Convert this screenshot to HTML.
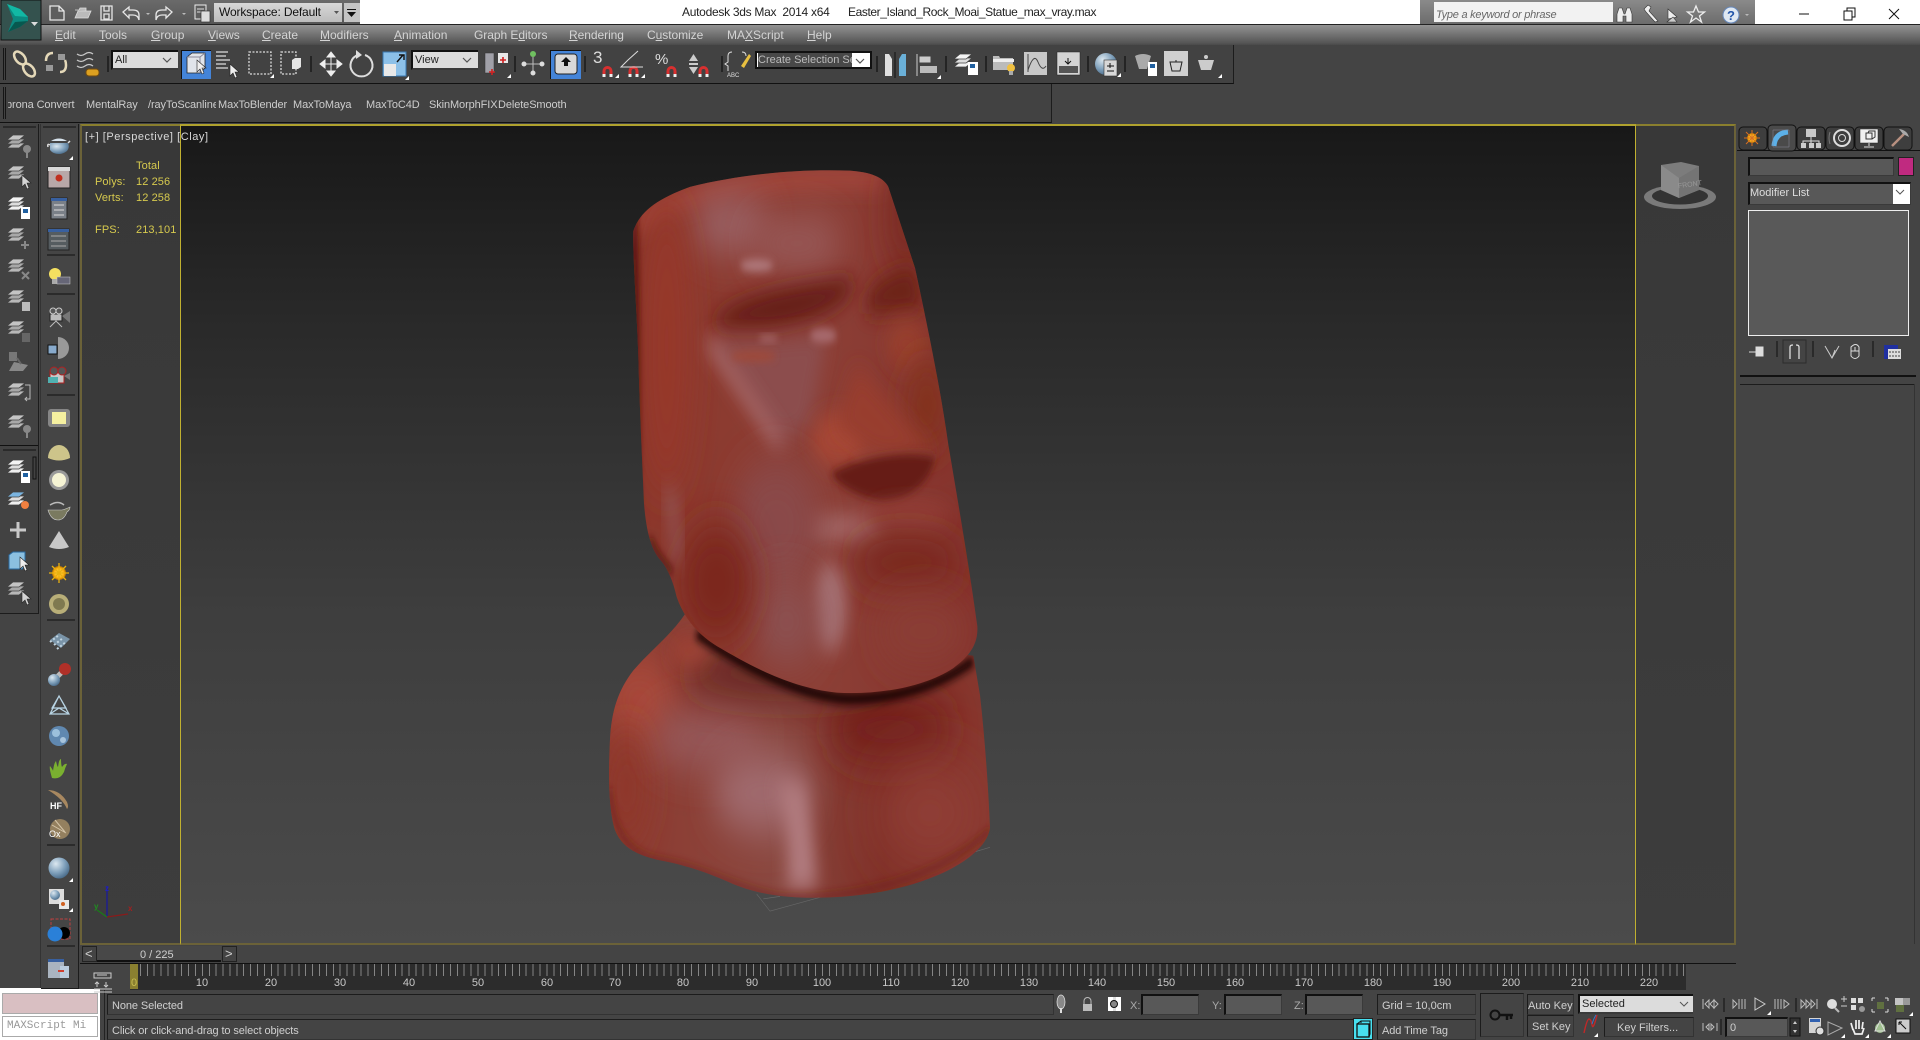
<!DOCTYPE html>
<html><head><meta charset="utf-8"><title>Autodesk 3ds Max 2014 x64</title>
<style>
html,body{margin:0;padding:0;width:1920px;height:1040px;overflow:hidden;background:#444;font-family:"Liberation Sans",sans-serif;}
div,span{position:absolute;box-sizing:border-box;white-space:nowrap;}
.t{font-size:12px;line-height:14px;color:#cfcfcf;}
.m{font-size:12px;line-height:14px;color:#d4d4d4;top:28px;}
.b{font-size:11px;line-height:13px;color:#cdcdcd;top:99px;letter-spacing:-.1px;}
.y{font-size:11px;line-height:13px;color:#d6c94e;letter-spacing:.1px;}
.r{font-size:11px;line-height:13px;color:#c8c8c8;top:977px;transform:translateX(-50%);}
.f{background:#585858;border-top:2px solid #111;border-left:2px solid #111;border-right:1px solid #3a3a3a;border-bottom:1px solid #3a3a3a;}
.bx{background:#444;border:1px solid #333;border-left-color:#1c1c1c;border-top-color:#1c1c1c;}
.d{background:#dcdcdc;border-top:2px solid #111;border-left:2px solid #111;border-bottom:2px solid #3a3a3a;color:#222;font-size:12px;line-height:16px;padding-left:2px;}
svg{position:absolute;left:0;top:0;}
u{text-decoration:underline;}
</style></head><body>

<!-- title bar -->
<div style="left:0;top:0;width:1920px;height:24px;background:#fff;"></div>
<div style="left:0;top:0;width:360px;height:24px;background:linear-gradient(#6a6a6a,#565656);"></div>
<div style="left:214px;top:3px;width:128px;height:19px;background:linear-gradient(#d8d8d8,#bcbcbc);"></div>
<div class="t" style="left:219px;top:5px;color:#111;font-size:12px;letter-spacing:-.15px;">Workspace: Default</div>
<div style="left:344px;top:3px;width:16px;height:19px;background:#c4c4c4;"></div>
<div class="t" style="left:682px;top:5px;color:#222;letter-spacing:-.28px;">Autodesk 3ds Max&nbsp; 2014 x64</div>
<div class="t" style="left:848px;top:5px;color:#222;letter-spacing:-.4px;">Easter_Island_Rock_Moai_Statue_max_vray.max</div>
<div style="left:1420px;top:0;width:335px;height:24px;background:linear-gradient(#8a8a8a,#6c6c6c);"></div>
<div style="left:1434px;top:2px;width:179px;height:20px;background:#f2f2f2;"></div>
<div class="t" style="left:1436px;top:8px;font-style:italic;font-size:11px;color:#666;letter-spacing:-.25px;">Type a keyword or phrase</div>

<!-- menu -->
<div style="left:0;top:24px;width:1920px;height:21px;background:linear-gradient(#939393,#555 90%,#4a4a4a);border-top:1px solid #222;"></div>
<div class="m" style="left:55px"><u>E</u>dit</div>
<div class="m" style="left:99px"><u>T</u>ools</div>
<div class="m" style="left:151px"><u>G</u>roup</div>
<div class="m" style="left:208px"><u>V</u>iews</div>
<div class="m" style="left:262px"><u>C</u>reate</div>
<div class="m" style="left:320px"><u>M</u>odifiers</div>
<div class="m" style="left:394px"><u>A</u>nimation</div>
<div class="m" style="left:474px;letter-spacing:-.05px">Graph E<u>d</u>itors</div>
<div class="m" style="left:569px;letter-spacing:-.05px"><u>R</u>endering</div>
<div class="m" style="left:647px;letter-spacing:-.05px">C<u>u</u>stomize</div>
<div class="m" style="left:727px">MA<u>X</u>Script</div>
<div class="m" style="left:807px"><u>H</u>elp</div>

<!-- toolbars -->
<div style="left:0;top:45px;width:1234px;height:39px;background:#424242;border-bottom:1px solid #111;border-right:1px solid #1c1c1c;"></div>
<div style="left:0;top:84px;width:1052px;height:39px;background:#424242;border-bottom:1px solid #111;border-right:1px solid #1c1c1c;"></div>
<div class="d" style="left:111px;top:50px;width:67px;height:20px;font-size:11px;">All</div>
<div style="left:181px;top:50px;width:30px;height:29px;background:#4484d8;border-left:1px solid #111;border-top:1px solid #111;"></div>
<div class="d" style="left:411px;top:50px;width:67px;height:20px;font-size:11px;">View</div>
<div style="left:550px;top:50px;width:31px;height:29px;background:#4484d8;border-left:1px solid #111;border-top:1px solid #111;"></div>
<div style="left:755px;top:51px;width:117px;height:18px;background:#fff;border:2px solid #111;"></div>
<div class="t" style="left:758px;top:53px;width:94px;height:14px;background:#484848;color:#bbb;font-size:11px;overflow:hidden;">Create Selection Se</div>

<div class="b" style="left:8px;width:70px;overflow:hidden;text-indent:-2px;">prona Convert</div>
<div class="b" style="left:86px">MentalRay</div>
<div class="b" style="left:148px;width:68px;overflow:hidden;">/rayToScanline</div>
<div class="b" style="left:218px">MaxToBlender</div>
<div class="b" style="left:293px">MaxToMaya</div>
<div class="b" style="left:366px">MaxToC4D</div>
<div class="b" style="left:429px">SkinMorphFIX</div>
<div class="b" style="left:498px">DeleteSmooth</div>

<!-- side toolbars -->
<div style="left:0;top:124px;width:39px;height:490px;background:#424242;border-right:1px solid #1c1c1c;border-bottom:1px solid #1c1c1c;"></div>
<div style="left:0;top:445px;width:38px;height:1px;background:#111;"></div>
<div style="left:40px;top:124px;width:39px;height:865px;background:#454545;border-right:1px solid #1c1c1c;border-left:1px solid #333;border-bottom:1px solid #1c1c1c;"></div>

<!-- viewport -->
<div style="left:80px;top:124px;width:1656px;height:821px;background:linear-gradient(#383838,#3d3d3d);border:2px solid #6b6238;border-top-color:#8a7f2e;"></div>
<div style="left:180px;top:124px;width:1456px;height:821px;background:linear-gradient(#181818 0,#2a2a2a 25%,#3e3e3e 60%,#4b4b4b 100%);border-left:1px solid #c0b030;border-right:1px solid #c0b030;border-top:2px solid #b0a22e;border-bottom:2px solid #6b6238;"></div>
<div class="t" style="left:85px;top:130px;font-size:11px;color:#d8d8d8;letter-spacing:.55px;">[+] [Perspective] [Clay]</div>
<div class="y" style="left:136px;top:160px">Total</div>
<div class="y" style="left:95px;top:176px">Polys:</div><div class="y" style="left:136px;top:176px">12 256</div>
<div class="y" style="left:95px;top:192px">Verts:</div><div class="y" style="left:136px;top:192px">12 258</div>
<div class="y" style="left:95px;top:224px">FPS:</div><div class="y" style="left:136px;top:224px">213,101</div>

<!-- moai -->
<svg style="left:590px;top:150px" width="420" height="770" viewBox="0 0 1260 1568" preserveAspectRatio="none">
<defs>
<clipPath id="ch"><path id="hp" d="M130,165 C150,125 200,100 300,75 C450,50 620,38 780,42 C840,45 880,55 895,75 L975,240 C1010,350 1050,480 1075,600 C1110,740 1140,860 1162,970 C1165,1005 1140,1030 1090,1055 C1000,1095 860,1110 740,1105 C600,1095 480,1050 380,1010 C320,985 280,950 260,910 C250,880 235,855 215,838 C190,820 170,790 162,720 C158,650 150,550 145,420 C140,320 128,220 130,165Z"/></clipPath>
<clipPath id="cb"><path d="M285,945 C240,990 180,1020 130,1060 C85,1100 65,1140 60,1200 C55,1270 55,1340 75,1385 C95,1420 140,1435 200,1445 C280,1455 350,1470 430,1495 C520,1520 620,1525 720,1522 C850,1518 980,1500 1080,1465 C1150,1440 1195,1410 1200,1380 C1195,1300 1185,1200 1170,1110 L1150,1030 Z"/></clipPath>
<filter id="b6" x="-60%" y="-60%" width="220%" height="220%"><feGaussianBlur stdDeviation="9"/></filter>
<filter id="b14" x="-80%" y="-80%" width="260%" height="260%"><feGaussianBlur stdDeviation="22"/></filter>
<filter id="b28" x="-100%" y="-100%" width="300%" height="300%"><feGaussianBlur stdDeviation="42"/></filter>
<filter id="b50" x="-100%" y="-100%" width="300%" height="300%"><feGaussianBlur stdDeviation="70"/></filter>
<linearGradient id="gh" x1="0" x2="1" y1="0" y2="0"><stop offset="0" stop-color="#7c2a20"/><stop offset=".15" stop-color="#8c382c"/><stop offset=".55" stop-color="#8c3f36"/><stop offset="1" stop-color="#84302a"/></linearGradient>
<linearGradient id="gb" x1="0" x2="1" y1="0" y2="0"><stop offset="0" stop-color="#8e372c"/><stop offset=".45" stop-color="#8a4840"/><stop offset=".7" stop-color="#7f2f26"/><stop offset="1" stop-color="#8a3930"/></linearGradient>
</defs>
<path d="M500,1515 L540,1550 L700,1520 M1150,1430 L1200,1420 M520,1525 L570,1520" stroke="#666" fill="none" stroke-width="1.500"/>
<g clip-path="url(#cb)">
<rect x="0" y="900" width="1260" height="668" fill="url(#gb)"/>
<ellipse cx="150" cy="1120" rx="110" ry="90" fill="#a8483a" filter="url(#b28)"/>
<ellipse cx="110" cy="1300" rx="60" ry="120" fill="#8f372c" filter="url(#b28)"/>
<ellipse cx="350" cy="1200" rx="170" ry="60" fill="#96595a" filter="url(#b28)"/>
<ellipse cx="520" cy="1310" rx="150" ry="80" fill="#a06a6e" filter="url(#b28)"/>
<path d="M560,1290 L640,1290 C660,1360 680,1440 680,1505 L590,1505 C600,1420 585,1350 560,1290Z" fill="#b07a7e" filter="url(#b14)"/>
<ellipse cx="900" cy="1180" rx="190" ry="70" fill="#74231a" filter="url(#b28)"/>
<ellipse cx="1020" cy="1350" rx="160" ry="90" fill="#923f38" filter="url(#b50)"/>
<ellipse cx="600" cy="1065" rx="320" ry="45" fill="#60201a" filter="url(#b28)"/>
<ellipse cx="300" cy="1020" rx="60" ry="30" fill="#9e4234" filter="url(#b14)"/>
<path d="M320,985 C480,1060 650,1115 780,1118 C920,1118 1050,1090 1150,1040" stroke="#150302" stroke-width="20" fill="none" filter="url(#b6)"/>
<path d="M60,1300 C70,1400 130,1440 220,1448 C350,1465 430,1500 560,1520 C800,1530 1050,1480 1200,1385" stroke="#6a2018" stroke-width="8" fill="none" filter="url(#b6)"/>
</g>
<g clip-path="url(#ch)">
<rect x="0" y="0" width="1260" height="1200" fill="url(#gh)"/>
<path d="M130,160 C200,100 500,45 890,60" stroke="#ab4a3c" stroke-width="30" fill="none" filter="url(#b14)"/>
<ellipse cx="420" cy="150" rx="120" ry="60" fill="#9a6064" filter="url(#b28)"/>
<ellipse cx="620" cy="190" rx="140" ry="50" fill="#985a5a" filter="url(#b28)"/>
<ellipse cx="500" cy="235" rx="50" ry="12" fill="#b07a7e" filter="url(#b6)"/>
<ellipse cx="230" cy="400" rx="70" ry="300" fill="#96372a" filter="url(#b28)"/>
<ellipse cx="135" cy="500" rx="14" ry="400" fill="#5a170f" filter="url(#b6)"/>
<ellipse cx="950" cy="130" rx="60" ry="130" fill="#7a2a20" filter="url(#b28)"/>
<path d="M360,355 C420,300 600,275 790,262 C800,300 700,345 560,360 C480,365 420,365 360,355Z" fill="#651a12" filter="url(#b14)"/>
<path d="M830,300 C860,260 930,240 975,240 L1000,320 C950,330 880,330 830,335Z" fill="#6c2016" filter="url(#b14)"/>
<ellipse cx="950" cy="395" rx="60" ry="50" fill="#97412f" filter="url(#b14)"/>
<ellipse cx="1010" cy="520" rx="60" ry="90" fill="#82301f" filter="url(#b28)"/>
<path d="M360,385 L540,385 L710,375 L680,480 L660,560 L570,600 Z" fill="#8c4e4e" filter="url(#b14)"/>
<path d="M355,388 L570,600" stroke="#ae7478" stroke-width="24" fill="none" filter="url(#b14)"/>
<ellipse cx="700" cy="378" rx="40" ry="14" fill="#a86c70" filter="url(#b6)"/>
<ellipse cx="535" cy="384" rx="30" ry="6" fill="#a86c70" filter="url(#b6)"/>
<ellipse cx="490" cy="420" rx="70" ry="10" fill="#a04838" filter="url(#b6)"/>
<ellipse cx="750" cy="590" rx="85" ry="55" fill="#a64636" filter="url(#b14)"/>
<path d="M800,440 L1035,620 L860,620 L740,560 Z" fill="#983e2f" filter="url(#b14)"/>
<path d="M720,660 C800,625 950,605 1035,620 C1030,670 960,715 880,715 C820,710 760,690 720,660Z" fill="#661b13" filter="url(#b6)"/>
<path d="M1035,620 C990,610 880,608 790,630" stroke="#9c4e42" stroke-width="6" fill="none" filter="url(#b6)"/>
<ellipse cx="760" cy="770" rx="120" ry="26" fill="#a46a6a" filter="url(#b14)"/>
<ellipse cx="960" cy="745" rx="120" ry="24" fill="#94423a" filter="url(#b14)"/>
<ellipse cx="950" cy="840" rx="170" ry="50" fill="#78271c" filter="url(#b28)"/>
<ellipse cx="560" cy="760" rx="130" ry="130" fill="#8a4a4a" filter="url(#b28)"/>
<ellipse cx="720" cy="930" rx="50" ry="90" fill="#a47072" filter="url(#b14)"/>
<ellipse cx="590" cy="960" rx="100" ry="90" fill="#8c4f50" filter="url(#b28)"/>
<ellipse cx="380" cy="880" rx="110" ry="120" fill="#7c281c" filter="url(#b28)"/>
<ellipse cx="1000" cy="980" rx="140" ry="70" fill="#8a3d34" filter="url(#b28)"/>
<path d="M235,690 C255,740 255,790 262,840" stroke="#97707a" stroke-width="16" fill="none" filter="url(#b14)"/>
<path d="M180,790 C200,830 230,845 245,860" stroke="#4a120c" stroke-width="12" fill="none" filter="url(#b6)"/>
</g>
</svg>

<!-- timeline slider -->
<div style="left:82px;top:946px;width:15px;height:16px;background:#444;border:1px solid #222;"></div>
<div class="t" style="left:85px;top:947px;font-size:13px;">&lt;</div>
<div style="left:97px;top:946px;width:124px;height:16px;background:#484848;border-bottom:2px solid #111;"></div>
<div class="t" style="left:140px;top:948px;font-size:11px;">0 / 225</div>
<div style="left:222px;top:946px;width:15px;height:16px;background:#444;border:1px solid #222;"></div>
<div class="t" style="left:225px;top:947px;font-size:13px;">&gt;</div>

<!-- ruler -->
<div style="left:80px;top:963px;width:1656px;height:1px;background:#111;"></div>
<div style="left:130px;top:964px;width:1556px;height:26px;background:#2c2c2c;"></div>
<div style="left:133px;top:964px;width:1553px;height:12px;background:repeating-linear-gradient(90deg,#858585 0,#858585 1px,transparent 1px,transparent 6.89px);"></div>
<div style="left:130px;top:964px;width:8px;height:25px;background:#8a8030;"></div>
<div class="r" style="left:134px;color:#c9bd50">0</div>
<div class="r" style="left:202px">10</div><div class="r" style="left:271px">20</div><div class="r" style="left:340px">30</div><div class="r" style="left:409px">40</div><div class="r" style="left:478px">50</div><div class="r" style="left:547px">60</div><div class="r" style="left:615px">70</div><div class="r" style="left:683px">80</div><div class="r" style="left:752px">90</div><div class="r" style="left:822px">100</div><div class="r" style="left:891px">110</div><div class="r" style="left:960px">120</div><div class="r" style="left:1029px">130</div><div class="r" style="left:1097px">140</div><div class="r" style="left:1166px">150</div><div class="r" style="left:1235px">160</div><div class="r" style="left:1304px">170</div><div class="r" style="left:1373px">180</div><div class="r" style="left:1442px">190</div><div class="r" style="left:1511px">200</div><div class="r" style="left:1580px">210</div><div class="r" style="left:1649px">220</div>

<!-- status -->
<div style="left:0;top:988px;width:41px;height:1px;background:#fff;"></div>
<div style="left:0;top:989px;width:100px;height:51px;background:#fff;"></div>
<div style="left:2px;top:993px;width:96px;height:21px;background:#d9bfc2;border:1px solid #aaa;"></div>
<div style="left:2px;top:1016px;width:96px;height:21px;background:#fff;border:1px solid #aaa;overflow:hidden;font-family:'Liberation Mono',monospace;font-size:11px;line-height:19px;color:#999;padding-left:4px;">MAXScript Mi</div>
<div style="left:104px;top:990px;width:1px;height:50px;background:#222;"></div>
<div class="bx" style="left:107px;top:994px;width:947px;height:21px;"></div>
<div class="t" style="left:112px;top:999px;font-size:11px;letter-spacing:-.1px;">None Selected</div>
<div class="bx" style="left:107px;top:1019px;width:1246px;height:21px;border-right:0;"></div>
<div class="t" style="left:112px;top:1024px;font-size:11px;letter-spacing:-.1px;">Click or click-and-drag to select objects</div>
<div class="t" style="left:1130px;top:999px;font-size:11px;color:#aaa;">X:</div>
<div class="f" style="left:1141px;top:994px;width:58px;height:21px;"></div>
<div class="t" style="left:1212px;top:999px;font-size:11px;color:#aaa;">Y:</div>
<div class="f" style="left:1224px;top:994px;width:58px;height:21px;"></div>
<div class="t" style="left:1294px;top:999px;font-size:11px;color:#aaa;">Z:</div>
<div class="f" style="left:1305px;top:994px;width:58px;height:21px;"></div>
<div class="bx" style="left:1377px;top:994px;width:99px;height:21px;"></div>
<div class="t" style="left:1382px;top:999px;font-size:11px;">Grid = 10,0cm</div>
<div class="bx" style="left:1377px;top:1019px;width:99px;height:21px;"></div>
<div class="t" style="left:1382px;top:1024px;font-size:11px;letter-spacing:-.1px;">Add Time Tag</div>
<div style="left:1353px;top:1018px;width:20px;height:22px;background:#48e0f0;border:1px solid #222;"></div>
<div class="bx" style="left:1480px;top:993px;width:44px;height:44px;"></div>
<div class="bx" style="left:1527px;top:994px;width:47px;height:21px;"></div>
<div class="t" style="left:1528px;top:999px;font-size:11px;">Auto Key</div>
<div class="bx" style="left:1527px;top:1015px;width:47px;height:22px;"></div>
<div class="t" style="left:1532px;top:1020px;font-size:11px;">Set Key</div>
<div class="d" style="left:1578px;top:994px;width:115px;height:20px;font-size:11px;">Selected</div>
<div class="bx" style="left:1604px;top:1017px;width:90px;height:20px;"></div>
<div class="t" style="left:1617px;top:1021px;font-size:11px;">Key Filters...</div>
<div class="f" style="left:1725px;top:1017px;width:63px;height:20px;"></div>
<div class="t" style="left:1730px;top:1021px;font-size:11px;">0</div>

<!-- command panel -->
<div style="left:1737px;top:150px;width:183px;height:1px;background:#111;"></div>
<div class="f" style="left:1748px;top:157px;width:146px;height:19px;"></div>
<div style="left:1898px;top:157px;width:16px;height:19px;background:#c02a80;border:1px solid #222;"></div>
<div class="f" style="left:1748px;top:182px;width:163px;height:23px;"></div>
<div style="left:1893px;top:184px;width:17px;height:20px;background:#fff;"></div>
<div class="t" style="left:1750px;top:186px;font-size:11px;color:#ddd;">Modifier List</div>
<div style="left:1748px;top:210px;width:161px;height:126px;background:#595959;border:1px solid #eee;"></div>
<div style="left:1740px;top:375px;width:176px;height:2px;background:#111;"></div>
<div style="left:1740px;top:384px;width:174px;height:1px;background:#1c1c1c;"></div>
<div style="left:1914px;top:384px;width:1px;height:560px;background:#333;"></div>

<!-- icons -->
<svg width="1920" height="1040" viewBox="0 0 1920 1040">
<defs>
<radialGradient id="sp" cx=".35" cy=".3" r=".8"><stop offset="0" stop-color="#dce8f0"/><stop offset=".55" stop-color="#7fa0bb"/><stop offset="1" stop-color="#3f6180"/></radialGradient>
<radialGradient id="sn" cx=".5" cy=".5" r=".5"><stop offset="0" stop-color="#ffe060"/><stop offset=".7" stop-color="#ffb010"/><stop offset="1" stop-color="#b07000"/></radialGradient>
<g id="ls" stroke="#424242" stroke-width=".7"><path d="M-9,5 L-3,0 H9 L3,5Z" fill="#b8b8b8"/><path d="M-9,1 L-3,-4 H9 L3,1Z" fill="#a8a8a8"/><path d="M-9,-3 L-3,-8 H9 L3,-3Z" fill="#c4c4c4"/></g>
<g id="lw" stroke="#424242" stroke-width=".7"><path d="M-9,5 L-3,0 H9 L3,5Z" fill="#f0f0f0"/><path d="M-9,1 L-3,-4 H9 L3,1Z" fill="#ddd"/><path d="M-9,-3 L-3,-8 H9 L3,-3Z" fill="#f4f4f4"/></g>
<g id="lb" stroke="#424242" stroke-width=".7"><path d="M-9,5 L-3,0 H9 L3,5Z" fill="#f0f0f0"/><path d="M-9,1 L-3,-4 H9 L3,1Z" fill="#ddd"/><path d="M-9,-3 L-3,-8 H9 L3,-3Z" fill="#7ab4e0"/></g>
<path id="cur" d="M0,0 L0,12 L3,9 L5,14 L7,13 L5,8 L9,8Z" fill="#eee" stroke="#222" stroke-width=".6"/>
<g id="tri"><path d="M0,4 L4,0 L4,4Z" fill="#fff"/></g>
<g id="mg"><path d="M0,10 v-5 a3.500,3.500 0 0 1 7,0 v5" stroke="#d83030" stroke-width="3" fill="none"/><path d="M-1.500,8 h3 v3 h-3z M5.500,8 h3 v3 h-3z" fill="#eee"/></g>
</defs>

<!-- logo -->
<rect x="1" y="0" width="40" height="40" fill="#34524e" stroke="#111"/>
<path d="M7,4 L20,9 L28,17 L28,21 L20,27 L8,32 L13,19Z" fill="#0c8a80"/><path d="M7,4 L20,9 L28,17 L15,16Z" fill="#12b8a4"/><path d="M8,32 L20,27 L28,21 L15,22Z" fill="#07584f"/><path d="M31,22 h7 l-3.500,4z" fill="#ddd"/>

<!-- quick access -->
<g fill="none" stroke="#e6e6e6" stroke-width="1.300">
<path d="M50,6 h9 l5,5 v9 h-14z M59,6 v5 h5" fill="#5e5e5e"/>
<path d="M75,10 h4 l1,-2 h6 v3 M75,18 l3,-7 h13 l-3,7z" fill="#bbb" stroke="#ddd" stroke-width=".8"/>
<path d="M101,6 h11 v14 h-11z M104,6 v5 h5 v-5 M104,14 h5 v5 h-5z"/>
<path d="M123,12 l6,-5 v3 h4 q6,0 6,5 v5 q-1,-5 -6,-5 h-4 v3z"/>
<path d="M172,12 l-6,-5 v3 h-4 q-6,0 -6,5 v5 q1,-5 6,-5 h4 v3z"/>
</g>
<path d="M146,13 h4 l-2,2z M182,13 h4 l-2,2z" fill="#bbb"/>
<rect x="195" y="5" width="11" height="14" fill="#5e5e5e" stroke="#eee"/><path d="M197,9 h7 M197,12 h7" stroke="#ddd"/><rect x="201" y="11" width="9" height="11" fill="#ddd" stroke="#333" stroke-width=".7"/>
<path d="M334,11 h5 l-2.500,3z" fill="#555"/><path d="M347,12 h9 l-4.500,5z M347,9 h9 v1 h-9z" fill="#111"/>

<!-- search icons -->
<g fill="#eee" stroke="#333" stroke-width=".6">
<path d="M1617,22 v-8 l2,-6 h3 l2,6 h1 l2,-6 h3 l2,6 v8 h-6 v-6 h-3 v6z"/>
<path d="M1644,9 l4,-4 l3,2 l-2,4 l9,10 l-3,1 l-9,-10z"/>
<path d="M1668,9 l9,8 l-9,2z"/><path d="M1667,22 h10 l-4,-5z" fill="#ccc"/>
<path d="M1696,6 l2.500,6 h6 l-5,4 l2,6 l-5.500,-4 l-5.500,4 l2,-6 l-5,-4 h6z" fill="none" stroke="#eee" stroke-width="1.300"/>
</g>
<circle cx="1731" cy="15" r="8" fill="#dfe8f2" stroke="#6688bb"/><text x="1727" y="20" font-family="Liberation Sans" font-size="13" font-weight="bold" fill="#2255aa">?</text>
<path d="M1745,14 h4 l-2,2z" fill="#bbb"/>
<path d="M1799,14 h10" stroke="#111" stroke-width="1"/>
<path d="M1844,11 h8 v9 h-8z M1847,11 v-3 h8 v9 h-3" fill="none" stroke="#111"/>
<path d="M1889,9 l10,10 M1899,9 l-10,10" stroke="#111"/>

<!-- grips / dividers -->
<path d="M3.500,48 v32 M5.500,48 v32 M3.500,87 v32 M5.500,87 v32" stroke="#111" stroke-width=".9"/>
<path d="M108,56 v16 M311,56 v16 M515,56 v16 M585,56 v16 M722,56 v16 M877,56 v16 M946,56 v16 M986,56 v16 M1088,56 v16 M1125,56 v16" stroke="#111" stroke-width="1.200"/>

<!-- link, unlink, bind -->
<g fill="none" stroke="#e4d8b8" stroke-width="2.500">
<ellipse cx="20" cy="58" rx="4.500" ry="7.500" transform="rotate(-40 20 58)"/><ellipse cx="29" cy="70" rx="4.500" ry="7.500" transform="rotate(-40 29 70)"/>
<path d="M53,53 q-7,0 -7,8 M60,72 q6,0 6,-7 q0,-3 -1,-5"/>
<path d="M77,54 q4,3 8,0 t8,0 M77,60 q4,3 8,0 t8,0 M77,66 q4,3 8,0 t8,0" stroke="#c8c8c8" stroke-width="1.300"/>
</g>
<g fill="#999"><rect x="58" y="54" width="7" height="6"/><rect x="46" y="65" width="7" height="6"/></g>
<rect x="86" y="69" width="13" height="7" rx="3" fill="#dca020" stroke="#704a10"/>

<!-- select -->
<path d="M187,57 l5,-4 h13 v15 l-5,5 h-13z" fill="#e0e4ea" stroke="#222" stroke-width=".8"/><path d="M200,57 h-13 M200,57 l5,-4 M200,57 v16" stroke="#889" fill="none"/>
<use href="#cur" x="197" y="60"/>
<path d="M216,52 h12 M216,56 h10 M216,60 h14 M216,64 h10 M216,68 h12" stroke="#ddd" stroke-width="1.200"/><use href="#cur" x="230" y="64"/>
<rect x="249" y="52" width="22" height="22" fill="none" stroke="#ddd" stroke-dasharray="2 1.500" stroke-width="1.300"/><use href="#tri" x="270" y="74"/>
<rect x="281" y="52" width="15" height="22" fill="none" stroke="#ddd" stroke-dasharray="2 1.500" stroke-width="1.300"/><path d="M292,60 l3,-2 h6 v9 l-3,2 h-6z" fill="#e4e4e4"/>
<path d="M322,64 h18 M331,55 v18 M327,57 l4,-5 l4,5z M327,71 l4,5 l4,-5z M325,60 l-5,4 l5,4z M337,60 l5,4 l-5,4z" stroke="#eee" fill="#eee" stroke-width="1"/>
<path d="M358,55 a11,11 0 1 0 7,0" fill="none" stroke="#ddd" stroke-width="2"/><path d="M356,50 l6,5 l-6,4z" fill="#ddd"/>
<rect x="383" y="52" width="23" height="24" fill="#8cc0e8" stroke="#3a78b0"/><rect x="384" y="64" width="12" height="12" fill="#e8e8e8"/><path d="M397,62 l6,-7 M399,55 h5 v5" stroke="#111" fill="none" stroke-width="1.400"/><use href="#tri" x="405" y="76"/>
<rect x="485" y="53" width="9" height="20" fill="#a0a0a8" stroke="#333" stroke-width=".5"/><rect x="498" y="53" width="10" height="10" fill="#e8e8e8"/><path d="M489,72 h6 M492,69 v6 M500,60 h6 M503,57 v6" stroke="#d02020" stroke-width="1.600"/><use href="#tri" x="507" y="74"/>
<path d="M524,64 h18 M533,55 v18" stroke="#bbb"/><circle cx="533" cy="54" r="3" fill="#70c060"/><circle cx="524" cy="64" r="2.500" fill="#ddd"/><circle cx="542" cy="64" r="2.500" fill="#ddd"/><circle cx="533" cy="73" r="2.500" fill="#ddd"/>
<rect x="555" y="54" width="22" height="20" rx="3" fill="#d8d8d8" stroke="#222"/><path d="M566,57 l5,5 h-3 v4 h-4 v-4 h-3z" fill="#111"/>
<text x="593" y="63" font-family="Liberation Sans" font-size="17" fill="#ddd">3</text>
<text x="655" y="64" font-family="Liberation Sans" font-size="15" fill="#ddd">%</text>
<use href="#mg" x="604" y="66"/><use href="#mg" x="630" y="66"/><use href="#mg" x="668" y="66"/><use href="#mg" x="700" y="66"/>
<path d="M628,60 l-7,7 h22 M638,51 l-10,9" stroke="#ddd" fill="none"/>
<use href="#tri" x="615" y="74"/><use href="#tri" x="641" y="74"/>
<path d="M689,61 h9 l-4.500,-7z" fill="#ccc"/><rect x="689" y="63" width="9" height="2" fill="#ccc"/><path d="M689,67 h9 l-4.500,7z" fill="#ccc"/>
<path d="M732,52 q-4,0 -4,4 v6 l-3,2 l3,2 v5 M742,52 q4,0 4,4" fill="none" stroke="#ddd"/><path d="M741,66 l8,-12 l2,2 l-7,12z" fill="#e8c040"/><text x="727" y="77" font-family="Liberation Sans" font-size="6" fill="#ddd">ABC</text>
<path d="M885,54 h4 l3,5 v17 h-7z" fill="#e0e0e0"/><path d="M906,54 h-4 l-3,5 v17 h7z" fill="#6ab0d8"/><path d="M895,52 v26" stroke="#111"/>
<path d="M917,54 v22 M920,57 h10 v5 h-10z" stroke="#ccc" fill="#ccc"/><rect x="920" y="66" width="17" height="7" fill="#bbb"/><use href="#tri" x="937" y="75"/>
<use href="#lw" x="963" y="62"/><rect x="968" y="62" width="10" height="13" fill="#fff"/><rect x="970" y="64" width="5" height="4" fill="#2060a0"/>
<path d="M993,56 h6 l1,2 h13 v12 h-20z" fill="#bbb"/><rect x="993" y="59" width="21" height="3" fill="#eee"/><circle cx="1011" cy="68" r="4" fill="#f0c040"/><rect x="1009" y="71" width="4" height="4" fill="#aaa"/>
<rect x="1024" y="52" width="23" height="23" fill="#c8c8c8"/><path d="M1028,72 v-18 M1028,70 q6,-18 10,-8 t8,4" stroke="#444" fill="none"/>
<rect x="1057" y="52" width="23" height="23" fill="#d4d4d4" stroke="#222" stroke-width=".5"/><rect x="1059" y="66" width="19" height="7" fill="#555"/><path d="M1068,58 v6 M1065,61 l3,3 l3,-3" stroke="#111" fill="none"/>
<circle cx="1106" cy="64" r="11" fill="url(#sp)"/><rect x="1104" y="60" width="13" height="16" fill="#d8d8d8" stroke="#333" stroke-width=".6"/><path d="M1107,66 h7 M1110,63 v5 M1107,71 h7" stroke="#111"/><use href="#tri" x="1117" y="73"/>
<path d="M1135,56 q8,-4 16,0 l-4,13 h-8z" fill="#aaa"/><rect x="1148" y="62" width="9" height="14" fill="#fff"/><rect x="1150" y="64" width="5" height="4" fill="#2060a0"/>
<rect x="1164" y="51" width="24" height="25" fill="#d0d0d0"/><path d="M1170,62 h12 l-2,9 h-8z M1176,60 v2" fill="none" stroke="#222"/>
<path d="M1198,60 h16 l-3,10 h-10z" fill="#ccc"/><circle cx="1206" cy="57" r="2" fill="#ccc"/><use href="#tri" x="1218" y="74"/>
<path d="M171,58 l-4,4 l-4,-4 M471,58 l-4,4 l-4,-4 M864,59 l-4,4 l-4,-4" fill="none" stroke="#555" stroke-width="1.200"/>

<!-- left column -->
<path d="M3,127 h33 M43,127 h33 M3,450 h33" stroke="#111" stroke-width="1"/>
<use href="#ls" x="16" y="143"/><circle cx="27" cy="149" r="4" fill="#888"/><rect x="26" y="152" width="2" height="6" fill="#888"/>
<use href="#ls" x="16" y="174"/><use href="#cur" x="22" y="175" opacity=".85"/>
<use href="#lw" x="16" y="205"/><rect x="21" y="207" width="9" height="12" fill="#fff"/><rect x="23" y="209" width="5" height="4" fill="#2060a0"/>
<use href="#ls" x="16" y="236"/><path d="M21,245 h8 M25,241 v8" stroke="#888" stroke-width="2"/>
<use href="#ls" x="16" y="267"/><path d="M22,272 l7,7 M29,272 l-7,7" stroke="#888" stroke-width="2"/>
<use href="#ls" x="16" y="298"/><rect x="22" y="302" width="8" height="9" fill="#bbb"/>
<use href="#ls" x="16" y="329"/><rect x="22" y="333" width="8" height="9" fill="#666"/>
<path d="M14,362 l14,3 l-5,6 h-14z" fill="#888"/><rect x="9" y="352" width="8" height="9" fill="#777"/><path d="M17,358 l4,6" stroke="#666" stroke-width="2"/>
<use href="#ls" x="16" y="391"/><path d="M25,385 h5 v14 h-4 M27,397 l-2,2 l2,2" stroke="#bbb" fill="none"/>
<use href="#ls" x="16" y="423"/><circle cx="27" cy="429" r="4" fill="#888"/><rect x="26" y="432" width="2" height="6" fill="#888"/>
<use href="#lw" x="16" y="468"/><rect x="21" y="471" width="9" height="12" fill="#fff"/><rect x="23" y="473" width="5" height="4" fill="#2060a0"/>
<rect x="33" y="457" width="3" height="22" fill="none" stroke="#111"/>
<use href="#lb" x="16" y="500"/><circle cx="25" cy="505" r="4" fill="#f08040"/>
<path d="M10,530 h16 M18,522 v16" stroke="#c8c8c8" stroke-width="3"/>
<path d="M9,555 l4,-3 h12 v14 l-3,3 h-13z" fill="#8cc0e0" stroke="#2a6aa0"/><use href="#cur" x="20" y="557"/>
<use href="#ls" x="16" y="590"/><use href="#cur" x="22" y="591" opacity=".85"/>

<!-- col 2 -->
<path d="M47,255 h28 M47,294 h28 M47,395 h28 M47,620 h28 M47,845 h28 M47,946 h28" stroke="#111" stroke-width="1"/>
<path d="M50,143 h18 q2,4 -1,8 q-4,3 -8,3 q-6,0 -9,-4z" fill="url(#sp)"/><path d="M51,141 q8,-5 16,0z" fill="#d8e4ee"/><path d="M68,143 l2,-2 M50,145 q-3,-2 -2,2" stroke="#ddd" fill="none" stroke-width="1.500"/><use href="#tri" x="69" y="156"/>
<rect x="48" y="167" width="22" height="21" fill="#b8a8a8" stroke="#222"/><rect x="48" y="167" width="22" height="4" fill="#d8d8d8"/><circle cx="59" cy="178" r="3.500" fill="#c03020"/>
<rect x="51" y="198" width="16" height="21" fill="#7a8088" stroke="#222"/><rect x="51" y="198" width="16" height="3" fill="#3860a0"/><path d="M54,205 h10 M54,210 h10 M54,215 h10" stroke="#ddd"/>
<rect x="48" y="229" width="21" height="21" fill="#555c60" stroke="#222"/><rect x="48" y="229" width="21" height="3" fill="#3860a0"/><path d="M51,236 h15 M51,241 h15 M51,246 h15" stroke="#aaa"/>
<circle cx="55" cy="274" r="6" fill="#f4e060"/><rect x="52" y="279" width="6" height="5" fill="#aaa"/><rect x="57" y="277" width="13" height="7" fill="#667" stroke="#ccc" stroke-width=".5"/>
<rect x="50" y="314" width="12" height="7" fill="#bbb" stroke="#222"/><circle cx="53" cy="311" r="3" fill="#555" stroke="#ccc"/><circle cx="59" cy="311" r="3" fill="#555" stroke="#ccc"/><path d="M62,316 l8,-5 v12z" fill="#777"/><path d="M50,327 l6,-6 l6,6" stroke="#bbb" fill="none"/>
<path d="M58,337 a11,11 0 0 1 0,22 z" fill="#999"/><rect x="48" y="345" width="9" height="9" fill="#88aacc" stroke="#111"/>
<rect x="50" y="372" width="14" height="11" fill="#c8c8c8" stroke="#b02020"/><circle cx="54" cy="371" r="4" fill="#555" stroke="#b02020"/><circle cx="62" cy="371" r="4" fill="#555" stroke="#b02020"/><path d="M64,376 l6,-3 v7z" fill="#777"/><rect x="48" y="377" width="10" height="6" fill="#50b0b0"/>
<rect x="48" y="409" width="22" height="18" rx="3" fill="#bbb" opacity=".55"/><rect x="52" y="412" width="14" height="12" fill="#f5f0a0"/>
<path d="M48,458 a11,13 0 0 1 22,0 q-11,5 -22,0z" fill="#cdc48a"/>
<circle cx="59" cy="480" r="10" fill="#999"/><circle cx="59" cy="480" r="7" fill="#f5f3d4"/>
<path d="M48,510 h14 q4,-1 8,-3 q0,3 -3,5 q-3,8 -9,8 q-7,0 -10,-10z" fill="#7a7a60" stroke="#ccc" stroke-width=".6"/><path d="M50,505 q8,-5 14,0" fill="none" stroke="#bbb" stroke-width="1.500"/>
<path d="M59,531 l10,16 q-10,4 -20,0z" fill="#c8c8c8"/>
<circle cx="59" cy="573" r="7" fill="url(#sn)"/><path d="M59,563 v20 M49,573 h20 M52,566 l14,14 M66,566 l-14,14" stroke="#e8b010" stroke-width="1.300"/>
<circle cx="59" cy="604" r="10" fill="#b8ae78"/><circle cx="59" cy="604" r="6" fill="#7f7950"/>
<path d="M50,640 l9,-7 l11,6 l-9,9z" fill="#7a94a8"/><path d="M50,642 l9,-7 M54,645 l9,-7 M57,649 l9,-7" stroke="#c0d4e0" stroke-dasharray="2 2" stroke-width="2"/>
<path d="M54,680 L64,670" stroke="#bbb" stroke-width="5"/><circle cx="54" cy="680" r="6" fill="url(#sp)"/><circle cx="65" cy="669" r="6" fill="#b03028"/>
<path d="M59,696 l-9,18 h19z M59,696 l-7,12 l14,0z M50,714 l9,-6 l10,6" fill="none" stroke="#b8d4e4" stroke-width="1.200"/>
<circle cx="59" cy="736" r="10" fill="#6088b0"/><circle cx="56" cy="733" r="4" fill="#9cc0dc"/><circle cx="63" cy="740" r="3" fill="#a8c4dc"/>
<path d="M52,778 q-3,-10 -2,-12 q3,4 3,5 q1,-8 3,-10 q1,5 2,6 q1,-8 3,-8 q0,6 1,8 q3,-4 5,-3 q-2,4 -3,8 q-4,8 -12,6z" fill="#7ab030"/>
<path d="M48,790 q12,0 19,12 q2,5 0,7 q-4,-10 -19,-19z" fill="#a88860"/><text x="50" y="809" font-family="Liberation Sans" font-size="9" fill="#fff" font-weight="bold">HF</text>
<circle cx="60" cy="829" r="10" fill="#94805f"/><path d="M52,825 l14,8 M55,820 l10,12" stroke="#d4c4a8"/><text x="49" y="837" font-family="Liberation Sans" font-size="9" fill="#fff">Ox</text>
<circle cx="59" cy="868" r="10.500" fill="url(#sp)"/><use href="#tri" x="69" y="878"/>
<rect x="49" y="889" width="15" height="15" fill="#ddd"/><circle cx="55" cy="895" r="5" fill="url(#sp)"/><rect x="59" y="900" width="10" height="9" fill="#e8e8e8"/><circle cx="63" cy="904" r="2" fill="#d06020"/><use href="#tri" x="69" y="908"/>
<rect x="51" y="919" width="19" height="20" fill="none" stroke="#c04040" stroke-dasharray="3 1.500"/><circle cx="64" cy="933" r="6" fill="#000"/><circle cx="55" cy="934" r="7.500" fill="#2a80d8"/>
<rect x="48" y="959" width="16" height="19" fill="#aab4c0"/><rect x="48" y="959" width="16" height="3" fill="#3860a0"/><rect x="60" y="966" width="9" height="12" fill="#bcd"/><path d="M58,971 h6" stroke="#d04030" stroke-width="2"/>

<!-- axis -->
<path d="M107,917 V886" stroke="#1a1a9a" stroke-width="1.300"/><path d="M107,917 L128,914" stroke="#8a1a1a" stroke-width="1.300"/><path d="M107,917 L97,910" stroke="#1a7a1a" stroke-width="1.300"/>
<text x="105" y="891" font-size="8" font-family="Liberation Sans" fill="#2222bb" font-weight="bold">z</text><text x="128" y="911" font-size="8" font-family="Liberation Sans" fill="#a02020" font-weight="bold">x</text><text x="94" y="909" font-size="8" font-family="Liberation Sans" fill="#209020" font-weight="bold">y</text>

<!-- viewcube -->
<ellipse cx="1680" cy="197" rx="36" ry="12" fill="#7a7a7a"/><ellipse cx="1680" cy="196" rx="28" ry="8.500" fill="#333"/>
<path d="M1661,165 l20,-3 l18,4 v24 l-20,8 l-18,-8z" fill="#7c7c7c"/><path d="M1679,178 l20,-12 v24 l-20,8z" fill="#747474"/><path d="M1661,165 l18,13 v20 l-18,-8z" fill="#8a8a8a"/><text x="1678" y="188" font-size="7" font-family="Liberation Sans" fill="#999" transform="rotate(-8 1680 186)">FRONT</text>

<!-- control icon row -->
<rect x="1739" y="127" width="28" height="23" rx="4" fill="#3e3e3e" stroke="#111"/><rect x="1768" y="125" width="28" height="26" rx="4" fill="#4a4a4a" stroke="#111"/><rect x="1797" y="127" width="28" height="23" rx="4" fill="#3e3e3e" stroke="#111"/><rect x="1826" y="127" width="28" height="23" rx="4" fill="#3e3e3e" stroke="#111"/><rect x="1855" y="127" width="28" height="23" rx="4" fill="#3e3e3e" stroke="#111"/><rect x="1884" y="127" width="28" height="23" rx="4" fill="#3e3e3e" stroke="#111"/>
<circle cx="1752" cy="138" r="5" fill="url(#sn)"/><path d="M1752,130 v16 M1744,138 h16 M1746,132 l12,12 M1758,132 l-12,12" stroke="#d87020"/>
<path d="M1774,146 q1,-13 14,-14" stroke="#5cb0e8" stroke-width="5" fill="none"/><path d="M1773,130 h16 v17 h-16z" fill="none" stroke="#889" stroke-width=".5"/>
<rect x="1806" y="129" width="10" height="8" fill="#c8c8c8"/><path d="M1811,137 v3 M1803,143 v-2 h16 v2 M1811,140 v3" stroke="#ddd" fill="none"/><rect x="1801" y="143" width="5" height="5" fill="#ccc"/><rect x="1809" y="143" width="5" height="5" fill="#ccc"/><rect x="1816" y="143" width="5" height="5" fill="#ccc"/>
<circle cx="1842" cy="138" r="8" fill="none" stroke="#ddd" stroke-width="2"/><circle cx="1842" cy="138" r="3.500" fill="none" stroke="#ddd"/><path d="M1830,132 q-2,6 0,12" stroke="#777" fill="none"/>
<rect x="1860" y="129" width="18" height="14" fill="#f0f0f0" stroke="#222" stroke-width=".5"/><path d="M1866,133 h6 v6 h-6z M1868,133 l1,-2 h6 v6 l-3,2" fill="none" stroke="#333"/><path d="M1869,143 v3 M1864,147 h10" stroke="#ddd"/>
<path d="M1892,146 l12,-12" stroke="#b89080" stroke-width="2.500"/><path d="M1899,129 q8,1 10,8 l-6,-3z" fill="#aaa"/>

<!-- modifier stack buttons -->
<path d="M1749,352 h7 M1756,347 v9 h7 v-9z" fill="#ddd" stroke="#ddd"/>
<path d="M1777,341 v16 M1813,341 v16 M1873,341 v16" stroke="#111"/>
<rect x="1783" y="340" width="23" height="23" fill="none" stroke="#2c2c2c"/><path d="M1793,345 q-3,0 -3,2 v12 M1796,345 q3,0 3,2 v12" stroke="#ddd" fill="none" stroke-width="1.300"/>
<path d="M1825,346 l7,12 l7,-12 M1832,358 l3,-8" stroke="#ccc" fill="none"/>
<path d="M1851,347 q5,-5 8,0 v9 q-4,5 -8,0z M1851,351 h8 M1855,347 v4" stroke="#ddd" fill="none"/>
<rect x="1884" y="345" width="14" height="14" fill="#2030a0"/><rect x="1888" y="349" width="13" height="10" fill="#ddd"/><path d="M1889,352 h11 M1889,356 h11" stroke="#444" stroke-dasharray="2 1"/>
<path d="M1896,190 l4,4 l4,-4" stroke="#555" fill="none"/>

<!-- timeline + status icons -->
<rect x="94" y="973" width="17" height="5" fill="none" stroke="#ccc"/><path d="M97,975 h10" stroke="#ccc"/><path d="M97,982 v5 M95,984 l2,-2 l2,2 M106,982 v5 M104,985 l2,2 l2,-2 M94,989 h18 M94,992 h18" stroke="#ccc" fill="none"/>
<ellipse cx="1061" cy="1002" rx="4" ry="7" fill="#888" stroke="#ddd" stroke-width=".8"/><rect x="1060" y="1008" width="2" height="5" fill="#ddd"/>
<path d="M1084,1004 v-3 a3.500,3.500 0 0 1 7,0 v3" stroke="#bbb" fill="none"/><rect x="1083" y="1004" width="9" height="7" fill="#bbb"/>
<rect x="1108" y="997" width="13" height="14" fill="#fff"/><rect x="1113" y="997" width="3" height="14" fill="#222" opacity=".15"/><circle cx="1114" cy="1004" r="3.500" fill="#888" stroke="#111"/>
<rect x="1357" y="1024" width="12" height="13" fill="none" stroke="#111" stroke-width="1.300"/><path d="M1357,1024 l4,-3 h9 v13 l-1,3 M1361,1021 v2" fill="none" stroke="#111"/>
<circle cx="1495" cy="1015" r="4.500" fill="none" stroke="#111" stroke-width="2"/><path d="M1500,1015 h13 M1507,1015 v5 M1511,1015 v4" stroke="#111" stroke-width="2.500"/>
<path d="M1584,1033 q3,-14 5,-14 q2,0 3,6 t5,-10" stroke="#c02828" fill="none" stroke-width="1.400"/><path d="M1592,1024 q2,-6 4,-9" stroke="#3878c8" fill="none"/><use href="#tri" x="1594" y="1033"/>
<path d="M1688,1002 l-4,4 l-4,-4" stroke="#555" fill="none"/>
<g fill="none" stroke="#bbb" stroke-width="1">
<path d="M1703,999 v10 M1705,1004 l4,-4 v8z M1710,1004 l4,-4 v8z M1718,1004 l-4,-4 v8z"/>
<path d="M1737,1004 l-4,-4 v8z M1739,999 v10 M1742,999 v10 M1745,999 v10"/>
<path d="M1755,998 l10,6 l-10,6z" stroke="#ccc"/>
<path d="M1775,999 v10 M1778,999 v10 M1781,999 v10 M1784,1000 l5,4 l-5,4z"/>
<path d="M1801,1000 l4,4 l-4,4z M1806,1000 l4,4 l-4,4z M1811,1000 l4,4 l-4,4z M1817,999 v10"/>
<path d="M1703,1023 v8 M1706,1027 l3,-3 v6z M1714,1027 l-3,-3 v6z M1717,1023 v8"/>
</g>
<path d="M1724,998 v14 M1796,998 v14 M1721,1019 v16" stroke="#111"/>
<use href="#tri" x="1767" y="1011"/>
<circle cx="1832" cy="1004" r="5" fill="#ddd"/><path d="M1835,1008 l4,4" stroke="#bbb" stroke-width="2"/><path d="M1841,999 h6 M1844,996 v6 M1841,1006 h6" stroke="#ccc"/>
<rect x="1851" y="998" width="5" height="5" fill="#ddd"/><rect x="1858" y="998" width="5" height="5" fill="#ddd"/><rect x="1851" y="1005" width="5" height="5" fill="#ddd"/><circle cx="1862" cy="1009" r="3" fill="#999"/>
<path d="M1872,998 h3 M1872,998 v3 M1888,998 h-3 M1888,998 v3 M1872,1012 h3 M1872,1012 v-3 M1888,1012 h-3 M1888,1012 v-3" stroke="#ddd"/><path d="M1877,1002 h7 v7 h-7z" fill="#607040"/>
<rect x="1895" y="998" width="8" height="7" fill="#c4c4c4"/><rect x="1903" y="998" width="7" height="7" fill="#999"/><rect x="1896" y="1005" width="8" height="7" fill="#607040"/><use href="#tri" x="1909" y="1012"/>
<rect x="1790" y="1018" width="10" height="18" fill="#333" stroke="#111"/><path d="M1795,1021 l-2,3 h4z M1795,1033 l-2,-3 h4z" fill="#ccc"/>
<rect x="1809" y="1018" width="12" height="15" fill="#d4d4d4"/><rect x="1810" y="1019" width="10" height="3" fill="#3060b0"/><circle cx="1820" cy="1031" r="4" fill="#ddd" stroke="#333"/>
<path d="M1828,1022 l14,6 l-14,7z" fill="none" stroke="#aaa"/><use href="#tri" x="1841" y="1034"/>
<path d="M1853,1030 l-2,-7 M1856,1029 v-9 M1859,1029 v-9 M1862,1029 l1,-7 M1853,1029 l2,5 h7 l2,-6" stroke="#eee" stroke-width="1.700" fill="none"/><use href="#tri" x="1865" y="1034"/>
<circle cx="1880" cy="1028" r="5" fill="#a0c090"/><path d="M1875,1031 l5,-10 l5,10z" fill="none" stroke="#ddd"/><use href="#tri" x="1887" y="1034"/>
<rect x="1896" y="1019" width="14" height="14" fill="#ccc" stroke="#111"/><path d="M1899,1022 l7,7 M1899,1022 v3 M1899,1022 h3" stroke="#111"/>
</svg>
</body></html>
